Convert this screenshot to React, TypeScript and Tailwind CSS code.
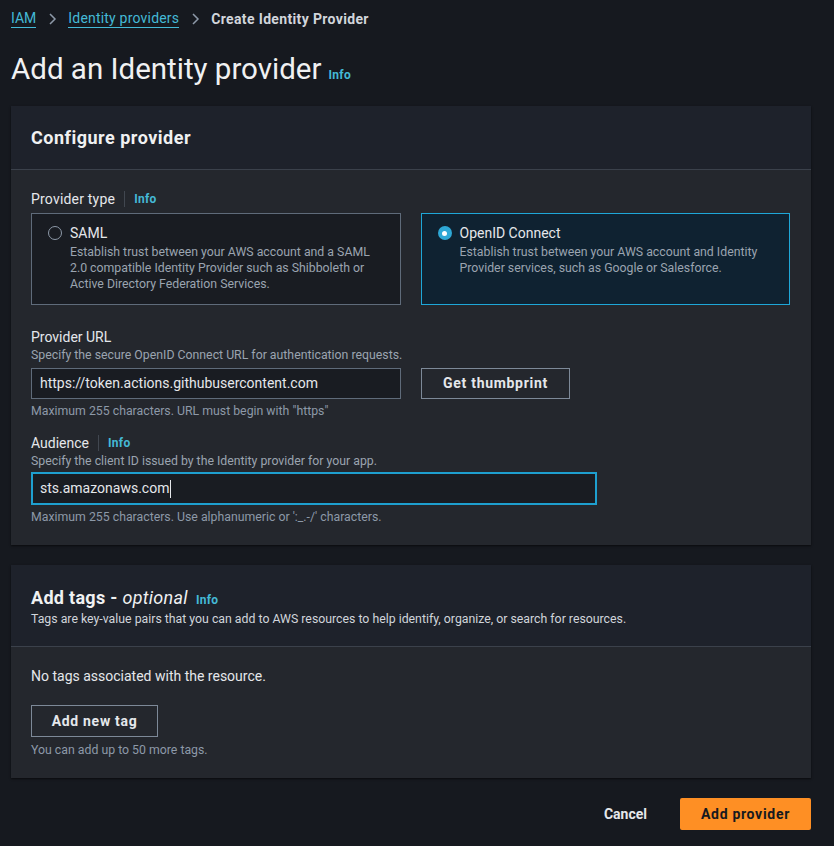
import React from "react";

const font = { fontFamily: "Roboto, 'Noto Sans', sans-serif" };

function Info() {
  return <span className="text-[12px] font-bold tracking-[0.3px] text-[#44b9d6]">Info</span>;
}

function Chevron() {
  return (
    <svg width="16" height="16" viewBox="0 0 16 16" className="text-[#8d99a8]">
      <path d="M6 3l5 5-5 5" fill="none" stroke="currentColor" strokeWidth="1.5" />
    </svg>
  );
}

function RadioCard({
  selected,
  title,
  desc,
}: {
  selected?: boolean;
  title: string;
  desc: string;
}) {
  return (
    <div
      className={
        "flex h-[92px] gap-[8px] px-[16px] pt-[10px] " +
        (selected
          ? "border border-[#1ea7d8] bg-[#0f2231]"
          : "border border-[#5f6b7a] bg-[#191c22]")
      }
    >
      <div className="pt-[2px]">
        {selected ? (
          <div className="flex h-[14px] w-[14px] items-center justify-center rounded-full bg-[#2ea8d6]">
            <div className="h-[5px] w-[5px] rounded-full bg-white" />
          </div>
        ) : (
          <div className="h-[14px] w-[14px] rounded-full border border-[#8d99a8]" />
        )}
      </div>
      <div>
        <div className="text-[14px] leading-[18px] text-[#e5e7eb]">{title}</div>
        <div className="mt-[2px] max-w-[302px] text-[12.3px] leading-[16px] text-[#9ba4b0]">{desc}</div>
      </div>
    </div>
  );
}

export default function App() {
  return (
    <div style={font} className="min-h-[846px] bg-[#16191f] px-[11px] pt-[8px] text-[#e5e7eb]">
      <nav className="flex h-[22px] items-center gap-[8px] text-[14px]">
        <a className="border-b border-[#44b9d6] leading-[17px] text-[#44b9d6]">IAM</a>
        <Chevron />
        <a className="border-b border-[#44b9d6] leading-[17px] tracking-[0.2px] text-[#44b9d6]">Identity providers</a>
        <Chevron />
        <span className="font-bold tracking-[0.35px] text-[#d1d5db]">Create Identity Provider</span>
      </nav>

      <div className="mt-[22px] flex items-baseline gap-[7px]">
        <h1 className="text-[29.5px] leading-[34px] text-[#f0f1f2]">Add an Identity provider</h1>
        <Info />
      </div>

      <section className="mt-[20px] w-[800px] bg-[#24272d] shadow-[0_1px_2px_rgba(0,0,0,0.6)]">
        <div className="flex h-[64px] items-center border-b border-[#3b414b] bg-[#1e222b] px-[20px]">
          <h2 className="text-[18px] font-bold tracking-[0.5px] text-[#f0f1f2]">Configure provider</h2>
        </div>
        <div className="px-[20px] pb-[20px] pt-[19px]">
          <div className="flex items-center text-[14px] leading-[20px] tracking-[0.2px]">
            <span>Provider type</span>
            <span className="mx-[9px] h-[16px] w-px bg-[#414750]" />
            <Info />
          </div>
          <div className="mt-[4px] grid grid-cols-2 gap-[20px] pr-[1px]">
            <RadioCard
              title="SAML"
              desc="Establish trust between your AWS account and a SAML 2.0 compatible Identity Provider such as Shibboleth or Active Directory Federation Services."
            />
            <RadioCard
              selected
              title="OpenID Connect"
              desc="Establish trust between your AWS account and Identity Provider services, such as Google or Salesforce."
            />
          </div>

          <div className="mt-[22px] text-[14px] leading-[20px]">Provider URL</div>
          <div className="text-[12.3px] leading-[16px] text-[#9ba4b0]">
            Specify the secure OpenID Connect URL for authentication requests.
          </div>
          <div className="mt-[5px] flex gap-[20px]">
            <div className="flex h-[31px] w-[370px] items-center border border-[#5f6b7a] bg-[#191c22] px-[8px] text-[14px] text-[#e5e7eb]">
              https://token.actions.githubusercontent.com
            </div>
            <button className="h-[31px] w-[149px] border border-[#7d8998] text-[14px] font-bold tracking-[0.7px] text-[#e5e7eb]">
              Get thumbprint
            </button>
          </div>
          <div className="mt-[4px] text-[12.3px] leading-[16px] text-[#8d99a8]">
            Maximum 255 characters. URL must begin with "https"
          </div>

          <div className="mt-[14px] flex items-center text-[14px] leading-[20px]">
            <span>Audience</span>
            <span className="mx-[9px] h-[16px] w-px bg-[#414750]" />
            <Info />
          </div>
          <div className="text-[12.3px] leading-[16px] text-[#9ba4b0]">
            Specify the client ID issued by the Identity provider for your app.
          </div>
          <div className="mt-[3px] flex h-[33px] w-[566px] items-center border-2 border-[#1e9fcf] bg-[#191c22] px-[7px] text-[14px] text-[#e5e7eb]">
            sts.amazonaws.com<span className="ml-[1px] h-[18px] w-px bg-[#e5e7eb]" />
          </div>
          <div className="mt-[4px] text-[12.3px] leading-[16px] text-[#8d99a8]">
            Maximum 255 characters. Use alphanumeric or ':_.-/' characters.
          </div>
        </div>
      </section>

      <section className="mt-[20px] w-[800px] bg-[#24272d] shadow-[0_1px_2px_rgba(0,0,0,0.6)]">
        <div className="h-[82px] border-b border-[#3b414b] bg-[#1e222b] px-[20px] pt-[21px]">
          <div className="flex items-baseline gap-[8px]">
            <h2 className="text-[18px] font-bold leading-[24px] tracking-[0.3px] text-[#f0f1f2]">
              Add tags - <span className="font-normal italic">optional</span>
            </h2>
            <Info />
          </div>
          <div className="mt-[1px] text-[12.3px] leading-[16px] text-[#d1d5db]">
            Tags are key-value pairs that you can add to AWS resources to help identify, organize, or search for resources.
          </div>
        </div>
        <div className="px-[20px] pb-[20px] pt-[19px]">
          <div className="text-[14px] leading-[20px] text-[#e5e7eb]">No tags associated with the resource.</div>
          <button className="mt-[19px] h-[32px] w-[127px] border border-[#7d8998] text-[14px] font-bold tracking-[0.7px] text-[#e5e7eb]">
            Add new tag
          </button>
          <div className="mt-[5px] text-[12.3px] leading-[16px] text-[#8d99a8]">You can add up to 50 more tags.</div>
        </div>
      </section>

      <div className="mt-[20px] flex w-[800px] items-center justify-end gap-[33px]">
        <button className="text-[14px] font-bold text-[#e5e7eb]">Cancel</button>
        <button className="h-[32px] w-[131px] rounded-[2px] bg-[#fe8f24] text-[14px] font-bold tracking-[0.7px] text-[#16191f]">
          Add provider
        </button>
      </div>
    </div>
  );
}
